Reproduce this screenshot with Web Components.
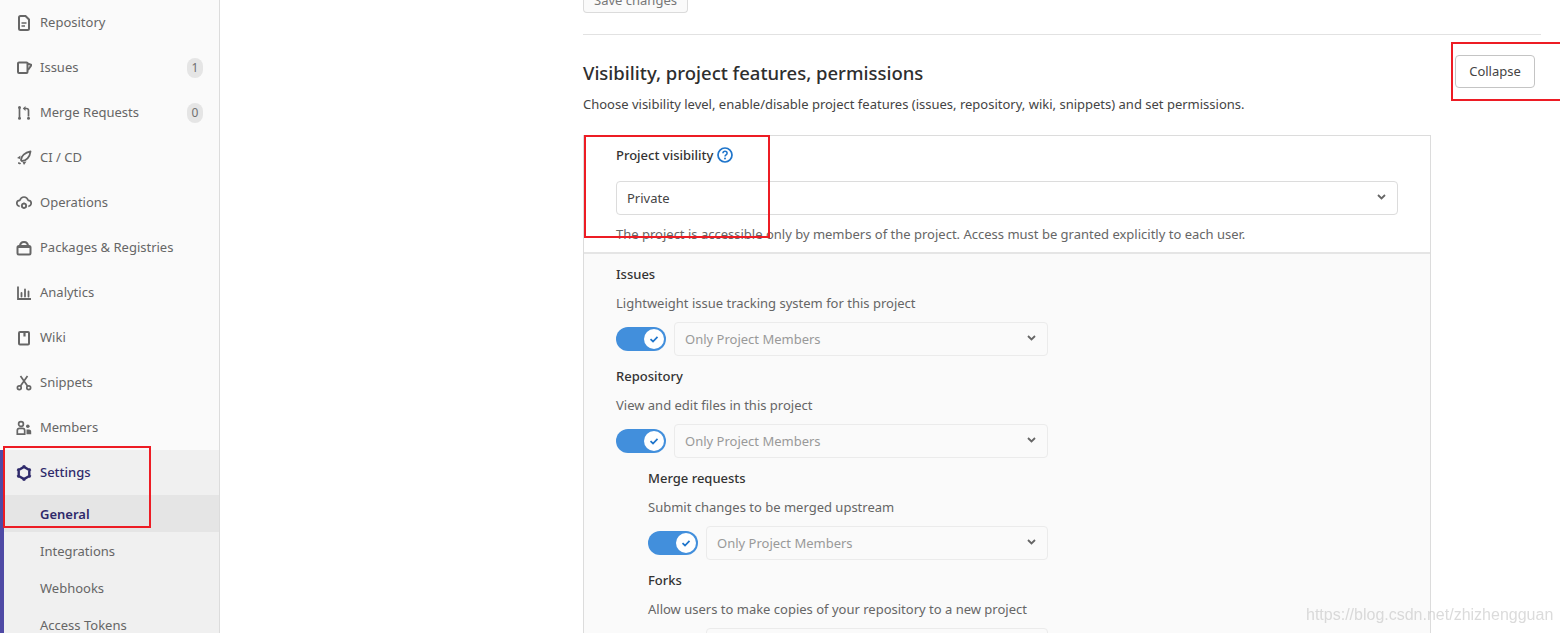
<!DOCTYPE html>
<html>
<head>
<meta charset="utf-8">
<title>Settings - General</title>
<style>
  html, body { margin: 0; height: 100%; overflow: hidden; background: #fff; }
  body { font-family: "Noto Sans", "Open Sans", sans-serif; font-size: 13px; color: #2e2e2e; }
</style>
</head>
<body>
<x-page>
  <x-sidebar slot="side">
    <x-nav-item icon="doc">Repository</x-nav-item>
    <x-nav-item icon="issues" badge="1">Issues</x-nav-item>
    <x-nav-item icon="merge" badge="0">Merge Requests</x-nav-item>
    <x-nav-item icon="rocket">CI / CD</x-nav-item>
    <x-nav-item icon="cloud">Operations</x-nav-item>
    <x-nav-item icon="bag">Packages &amp; Registries</x-nav-item>
    <x-nav-item icon="chart">Analytics</x-nav-item>
    <x-nav-item icon="book">Wiki</x-nav-item>
    <x-nav-item icon="scissors">Snippets</x-nav-item>
    <x-nav-item icon="users">Members</x-nav-item>
    <x-nav-group>
      <x-nav-item icon="gear" active>Settings</x-nav-item>
      <x-sub-item active>General</x-sub-item>
      <x-sub-item>Integrations</x-sub-item>
      <x-sub-item>Webhooks</x-sub-item>
      <x-sub-item>Access Tokens</x-sub-item>
    </x-nav-group>
  </x-sidebar>
  <x-section>
    <x-panel>
      <x-visibility></x-visibility>
      <x-features>
        <x-feature name="Issues" desc="Lightweight issue tracking system for this project"></x-feature>
        <x-feature name="Repository" desc="View and edit files in this project"></x-feature>
        <x-feature sub name="Merge requests" desc="Submit changes to be merged upstream"></x-feature>
        <x-feature sub name="Forks" desc="Allow users to make copies of your repository to a new project"></x-feature>
      </x-features>
    </x-panel>
  </x-section>
</x-page>
<x-mark style="left:3px;top:446px;width:148px;height:82px"></x-mark>
<x-mark style="left:584px;top:135px;width:186px;height:103px"></x-mark>
<x-mark style="left:1451px;top:42px;width:120px;height:59px"></x-mark>
<x-watermark>https://blog.csdn.net/zhizhengguan</x-watermark>

<script>
const ICONS = {
  doc: `<path d="M3.5 2.5a1.5 1.5 0 0 1 1.5-1.5h5l3.5 3.5V13.5a1.5 1.5 0 0 1-1.5 1.5H5a1.5 1.5 0 0 1-1.5-1.5z" transform="translate(-.5 0)" fill="none" stroke="currentColor" stroke-width="2"/><path d="M5.5 8h5M5.5 11h3.5" stroke="currentColor" stroke-width="1.5"/>`,
  issues: `<path d="M3 2.5h7.5a1 1 0 0 1 1 1V12a1 1 0 0 1-1 1H3a1 1 0 0 1-1-1V3.500a1 1 0 0 1 1-1z" fill="none" stroke="currentColor" stroke-width="2"/><path d="M11.500 3.500 15.500 5 12 10" fill="none" stroke="currentColor" stroke-width="2" stroke-linejoin="round"/>`,
  merge: `<path d="M3.500 3.500v9M12.500 5.500v6M12.500 5.500a2 2 0 0 0-2-2H9" fill="none" stroke="currentColor" stroke-width="1.700"/><path d="M9.500 1v5L6.800 3.500z" fill="currentColor"/><circle cx="3.500" cy="2.600" r="1.500" fill="currentColor"/><circle cx="3.500" cy="13.300" r="1.500" fill="currentColor"/><circle cx="12.500" cy="13.300" r="1.500" fill="currentColor"/>`,
  rocket: `<path d="M5 10c0-4 4-7.500 9.500-8.500C14 7 10 11 6 11z" fill="none" stroke="currentColor" stroke-width="1.800" stroke-linejoin="round"/><path d="M4.500 5.500 1 8l3 1zM10.500 11.500 8 15l-1.500-3z" fill="currentColor"/><path d="M2 13c1 0 2 .2 2.500 1" stroke="currentColor" stroke-width="1.500" fill="none"/>`,
  cloud: `<path d="M3.700 11.500C1.900 11 .8 9.800 .8 8.300c0-1.700 1.300-2.900 3-3C4.500 3.300 6.100 2 8 2s3.500 1.300 4.200 3.300c1.700.1 3 1.300 3 3 0 1.500-1.100 2.700-2.900 3.200" fill="none" stroke="currentColor" stroke-width="1.700"/><circle cx="8" cy="10.800" r="2.100" fill="none" stroke="currentColor" stroke-width="1.800"/><path d="M8 7.500v1M8 13v1M4.900 10.800h1M10.100 10.800h1M5.900 8.700l.6.600M9.500 12.300l.6.600M10.100 8.700l-.6.600M6.500 12.300l-.6.600" stroke="currentColor" stroke-width="1.300"/>`,
  bag: `<rect x="1.500" y="6" width="13" height="8.500" rx="1.500" fill="none" stroke="currentColor" stroke-width="2"/><path d="M4 6.500C4 3.500 5.500 2 8 2s4 1.500 4 4.500" fill="none" stroke="currentColor" stroke-width="2"/><path d="M1.500 7h13" stroke="currentColor" stroke-width="2"/>`,
  chart: `<path d="M2 1.500V14h13" fill="none" stroke="currentColor" stroke-width="1.800"/><path d="M5.500 8v3.500M9 4.500v7M12.500 6.500v5" stroke="currentColor" stroke-width="1.800" stroke-linecap="round"/>`,
  book: `<rect x="3" y="2" width="10" height="12.500" rx="1" fill="none" stroke="currentColor" stroke-width="2"/><path d="M8.500 2v4.500" stroke="currentColor" stroke-width="2.200"/>`,
  scissors: `<circle cx="3.300" cy="12.700" r="1.900" fill="none" stroke="currentColor" stroke-width="1.700"/><circle cx="12.700" cy="12.700" r="1.900" fill="none" stroke="currentColor" stroke-width="1.700"/><path d="M4.500 11 11.500 1M11.500 11 4.500 1" stroke="currentColor" stroke-width="1.700"/>`,
  users: `<circle cx="5" cy="4" r="2.400" fill="none" stroke="currentColor" stroke-width="1.700"/><path d="M1.300 14.200V10.500c0-1.300.9-2.200 2.200-2.200h3c1.300 0 2.200.9 2.200 2.200v3.700z" fill="none" stroke="currentColor" stroke-width="1.700"/><circle cx="11.800" cy="6.300" r="1.800" fill="currentColor"/><path d="M10.500 9.500h2.500c1.300 0 2.200.9 2.200 2.200v2.500h-4.700z" fill="currentColor"/>`,
  gear: `<path d="M8 1.900 13.300 4.950V11.050L8 14.100 2.700 11.050V4.950z" fill="none" stroke="currentColor" stroke-width="2.400" stroke-linejoin="round"/><path d="M8 .3v2M8 13.700v2M1.300 4.100l1.700 1M13 10.900l1.700 1M14.700 4.100l-1.700 1M3 10.900l-1.700 1" stroke="currentColor" stroke-width="2.600"/>`
};

function shadow(el, html) {
  el.attachShadow({ mode: "open" }).innerHTML = html;
}

class XPage extends HTMLElement {
  connectedCallback() {
    shadow(this, `
      <style>
        :host { display: flex; height: 633px; overflow: hidden; }
        main { flex: 1; min-width: 0; padding: 0 19px 0 363px; }
      </style>
      <slot name="side"></slot>
      <main><slot></slot></main>
    `);
  }
}

class XSidebar extends HTMLElement {
  connectedCallback() {
    shadow(this, `
      <style>
        :host { display: block; width: 219px; flex: none; height: 633px; overflow: hidden; background: #fafafa; border-right: 1px solid #dcdcdc; }
      </style>
      <slot></slot>
    `);
  }
}

class XNavItem extends HTMLElement {
  connectedCallback() {
    const badge = this.getAttribute("badge");
    const icon = ICONS[this.getAttribute("icon")] || "";
    const active = this.hasAttribute("active");
    shadow(this, `
      <style>
        :host { display: flex; align-items: center; height: 45px; padding-left: 16px; padding-right: 16px; gap: 8px; color: ${active ? "#2f2a6b" : "#666"}; ${active ? "font-weight:500;margin-left:-4px;padding-left:16px;" : ""} }
        svg { width: 16px; height: 16px; flex: none; }
        .label { flex: 1; padding-bottom: 1px; }
        .badge { width: 16px; height: 20px; border-radius: 10px; background: #e5e5e5; font-size: 12px; color: #707070; display: flex; align-items: center; justify-content: center; }
      </style>
      <svg viewBox="0 0 16 16">${icon}</svg>
      <span class="label"><slot></slot></span>
      ${badge !== null ? `<span class="badge">${badge}</span>` : ""}
    `);
  }
}

class XNavGroup extends HTMLElement {
  connectedCallback() {
    shadow(this, `
      <style>
        :host { display: block; background: #f0f0f0; border-left: 4px solid #4f4aa5; height: 240px; }
      </style>
      <slot></slot>
    `);
  }
}

class XSubItem extends HTMLElement {
  connectedCallback() {
    const active = this.hasAttribute("active");
    shadow(this, `
      <style>
        :host { display: flex; align-items: center; height: 37px; padding-left: 36px; color: ${active ? "#2f2a6b" : "#666"}; ${active ? "background:#e5e5e5;font-weight:600;" : ""} }
      </style>
      <slot></slot>
    `);
  }
}

class XSection extends HTMLElement {
  connectedCallback() {
    shadow(this, `
      <style>
        :host { display: block; }
        .save { box-sizing: border-box; width: 105px; height: 13px; border: 1px solid #dbdbdb; border-top: 0; border-radius: 0 0 4px 4px; background: #fafafa; display: flex; align-items: flex-end; justify-content: center; font-size: 13px; line-height: 18px; color: #777; overflow: hidden; }
        .save span { margin-bottom: 3px; }
        hr { border: 0; border-top: 1px solid #e2e2e2; margin: 21px 0 0; }
        .head { display: flex; justify-content: space-between; padding-top: 20px; }
        h4 { margin: 0; font-size: 18.500px; font-weight: 500; line-height: 36px; color: #2e2e2e; }
        button { box-sizing: border-box; width: 80px; height: 33px; margin-right: 6px; border: 1px solid #c4c4c4; border-radius: 4px; background: #fff; font: inherit; color: #444; padding: 0 0 2px; }
        p { margin: 3px 0 21px; line-height: 20px; color: #444; }
      </style>
      <div class="save"><span>Save changes</span></div>
      <hr>
      <div class="head"><h4>Visibility, project features, permissions</h4><button>Collapse</button></div>
      <p>Choose visibility level, enable/disable project features (issues, repository, wiki, snippets) and set permissions.</p>
      <slot></slot>
    `);
  }
}

class XPanel extends HTMLElement {
  connectedCallback() {
    shadow(this, `
      <style>
        :host { display: block; box-sizing: border-box; width: 848px; border: 1px solid #dcdcdc; border-bottom: 0; }
      </style>
      <slot></slot>
    `);
  }
}

class XVisibility extends HTMLElement {
  connectedCallback() {
    shadow(this, `
      <style>
        :host { display: block; padding: 9px 32px 0; height: 107px; box-sizing: border-box; border-bottom: 2px solid #e5e5e5; height: 118px; }
        .label { display: flex; align-items: center; gap: 4px; font-weight: 500; color: #333; line-height: 20px; }
        svg { width: 16px; height: 16px; }
        x-select { margin-top: 16px; }
        .help { margin-top: 9px; line-height: 20px; color: #666; }
      </style>
      <div class="label">Project visibility
        <svg viewBox="0 0 16 16"><circle cx="8" cy="8" r="7" fill="none" stroke="#1f75cb" stroke-width="1.700"/><path d="M5.900 6.200C6 5 6.900 4.300 8 4.300c1.200 0 2.100.8 2.100 1.900 0 1.700-2.100 1.600-2.100 3.300" fill="none" stroke="#1f75cb" stroke-width="1.500"/><circle cx="8" cy="11.500" r="1" fill="#1f75cb"/></svg>
      </div>
      <x-select value="Private"></x-select>
      <div class="help">The project is accessible only by members of the project. Access must be granted explicitly to each user.</div>
    `);
  }
}

class XFeatures extends HTMLElement {
  connectedCallback() {
    shadow(this, `
      <style>
        :host { display: block; background: #fafafa; padding: 10px 32px 0 32px; height: 400px; }
      </style>
      <slot></slot>
    `);
  }
}

class XFeature extends HTMLElement {
  connectedCallback() {
    const sub = this.hasAttribute("sub");
    shadow(this, `
      <style>
        :host { display: block; height: 102px; padding-left: ${sub ? 32 : 0}px; box-sizing: border-box; width: 432px; }
        .name { font-weight: 500; color: #333; line-height: 20px; }
        .desc { margin-top: 9px; color: #666; line-height: 20px; }
        .row { display: flex; align-items: center; gap: 8px; margin-top: 9px; }
        x-select { flex: 1; }
      </style>
      <div class="name">${this.getAttribute("name")}</div>
      <div class="desc">${this.getAttribute("desc")}</div>
      <div class="row"><x-toggle></x-toggle><x-select disabled value="Only Project Members"></x-select></div>
    `);
  }
}

class XToggle extends HTMLElement {
  connectedCallback() {
    shadow(this, `
      <style>
        :host { display: block; position: relative; width: 50px; height: 24px; border-radius: 12px; background: #428fdc; flex: none; }
        .knob { position: absolute; right: 2px; top: 2px; width: 20px; height: 20px; border-radius: 50%; background: #fff; display: flex; align-items: center; justify-content: center; }
        svg { width: 10px; height: 10px; }
      </style>
      <div class="knob"><svg viewBox="0 0 10 10"><path d="M1.500 5.200 4 7.500 8.500 2.800" fill="none" stroke="#1f75cb" stroke-width="1.700"/></svg></div>
    `);
  }
}

class XSelect extends HTMLElement {
  connectedCallback() {
    const off = this.hasAttribute("disabled");
    shadow(this, `
      <style>
        :host { display: flex; box-sizing: border-box; height: 34px; align-items: center; justify-content: space-between; padding: 0 11px 0 10px; border: 1px solid ${off ? "#ebebeb" : "#dcdcdc"}; border-radius: 4px; background: ${off ? "#fafafa" : "#fff"}; color: ${off ? "#999" : "#444"}; }
        span { padding-bottom: 1px; }
        svg { width: 9px; height: 6px; margin-bottom: 3px; }
      </style>
      <span>${this.getAttribute("value")}</span>
      <svg viewBox="0 0 9 6"><path d="M1 1 4.500 4.500 8 1" fill="none" stroke="#666" stroke-width="1.800"/></svg>
    `);
  }
}

class XMark extends HTMLElement {
  connectedCallback() {
    shadow(this, `
      <style>
        :host { display: block; position: absolute; box-sizing: border-box; border: 2px solid #ed1c24; pointer-events: none; }
      </style>
    `);
  }
}

class XWatermark extends HTMLElement {
  connectedCallback() {
    shadow(this, `
      <style>
        :host { display: block; position: absolute; left: 1306px; top: 605px; font: 16px/20px "Liberation Sans", sans-serif; color: rgba(190,190,190,.55); filter: blur(.5px); }
      </style>
      <slot></slot>
    `);
  }
}

customElements.define("x-page", XPage);
customElements.define("x-sidebar", XSidebar);
customElements.define("x-nav-item", XNavItem);
customElements.define("x-nav-group", XNavGroup);
customElements.define("x-sub-item", XSubItem);
customElements.define("x-section", XSection);
customElements.define("x-panel", XPanel);
customElements.define("x-visibility", XVisibility);
customElements.define("x-features", XFeatures);
customElements.define("x-feature", XFeature);
customElements.define("x-toggle", XToggle);
customElements.define("x-select", XSelect);
customElements.define("x-mark", XMark);
customElements.define("x-watermark", XWatermark);
</script>
</body>
</html>
